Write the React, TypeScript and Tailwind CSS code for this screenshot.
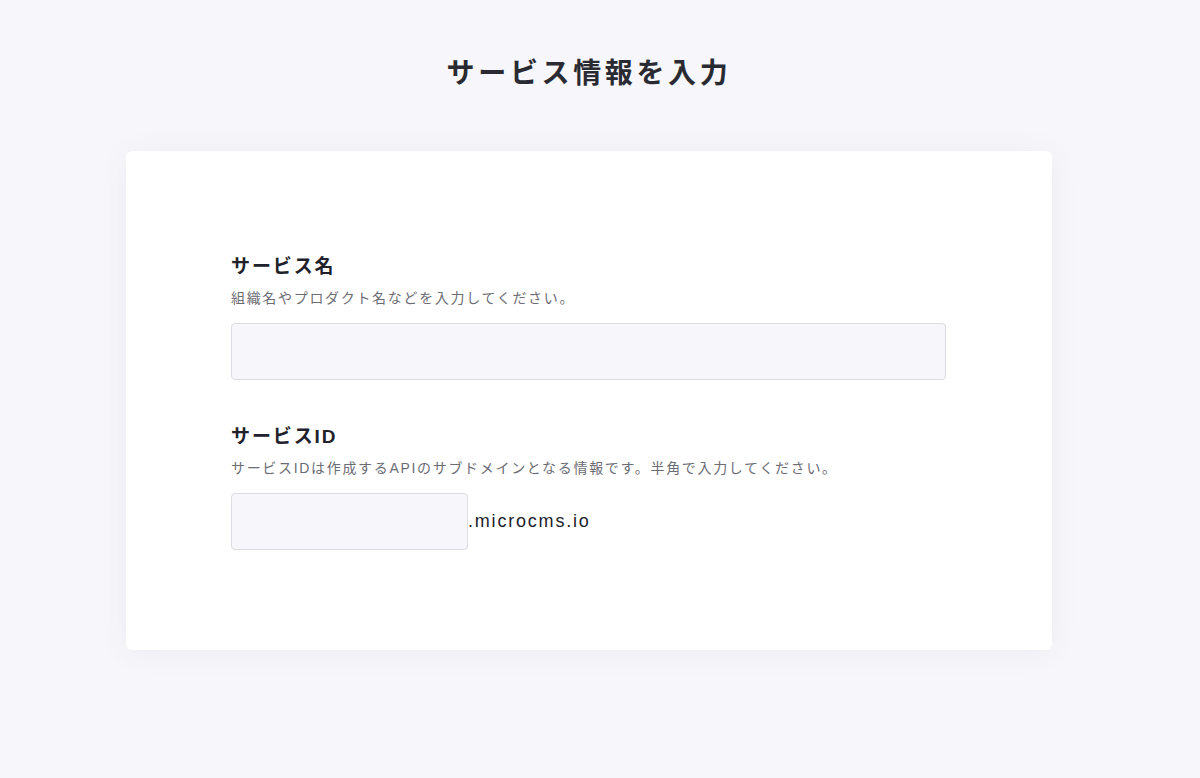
const font = "font-['Hiragino_Sans','Liberation_Sans','Noto_Sans_CJK_JP',sans-serif]";

function Field({
  label,
  help,
  children,
}: {
  label: string;
  help: string;
  children: React.ReactNode;
}) {
  return (
    <div>
      <h3 className="text-[19px] leading-[27px] font-bold tracking-[0.1em] text-[#21212b]">{label}</h3>
      <p className="mt-2 text-[14px] leading-[21px] tracking-[0.12em] text-[#6c6c74]">{help}</p>
      <div className="mt-[14px]">{children}</div>
    </div>
  );
}

export default function App() {
  return (
    <div className={`min-h-screen w-full bg-[#f7f7fb] ${font}`}>
      <div className="w-[1178px] pt-[53px] pb-20 flex flex-col items-center">
        <h1 className="text-[28px] leading-[42px] font-bold tracking-[0.13em] text-[#2a2a32]">
          サービス情報を入力
        </h1>

        <div className="mt-[56px] w-[926px] bg-white rounded-md shadow-[0_2px_30px_rgba(40,40,80,0.06)] px-[105px] pt-[102px] pb-[100px]">
          <Field label="サービス名" help="組織名やプロダクト名などを入力してください。">
            <input
              type="text"
              className="block w-[715px] h-[57px] rounded-[4px] border border-[#dcdce2] bg-[#f7f7fb] px-4 text-[16px] outline-none"
            />
          </Field>

          <div className="mt-[43px]">
            <Field
              label="サービスID"
              help="サービスIDは作成するAPIのサブドメインとなる情報です。半角で入力してください。"
            >
              <div className="flex items-center">
                <input
                  type="text"
                  className="block w-[237px] h-[57px] rounded-[4px] border border-[#dcdce2] bg-[#f7f7fb] px-4 text-[16px] outline-none"
                />
                <span className="text-[18px] tracking-[0.1em] text-[#21212b]">.microcms.io</span>
              </div>
            </Field>
          </div>
        </div>
      </div>
    </div>
  );
}
